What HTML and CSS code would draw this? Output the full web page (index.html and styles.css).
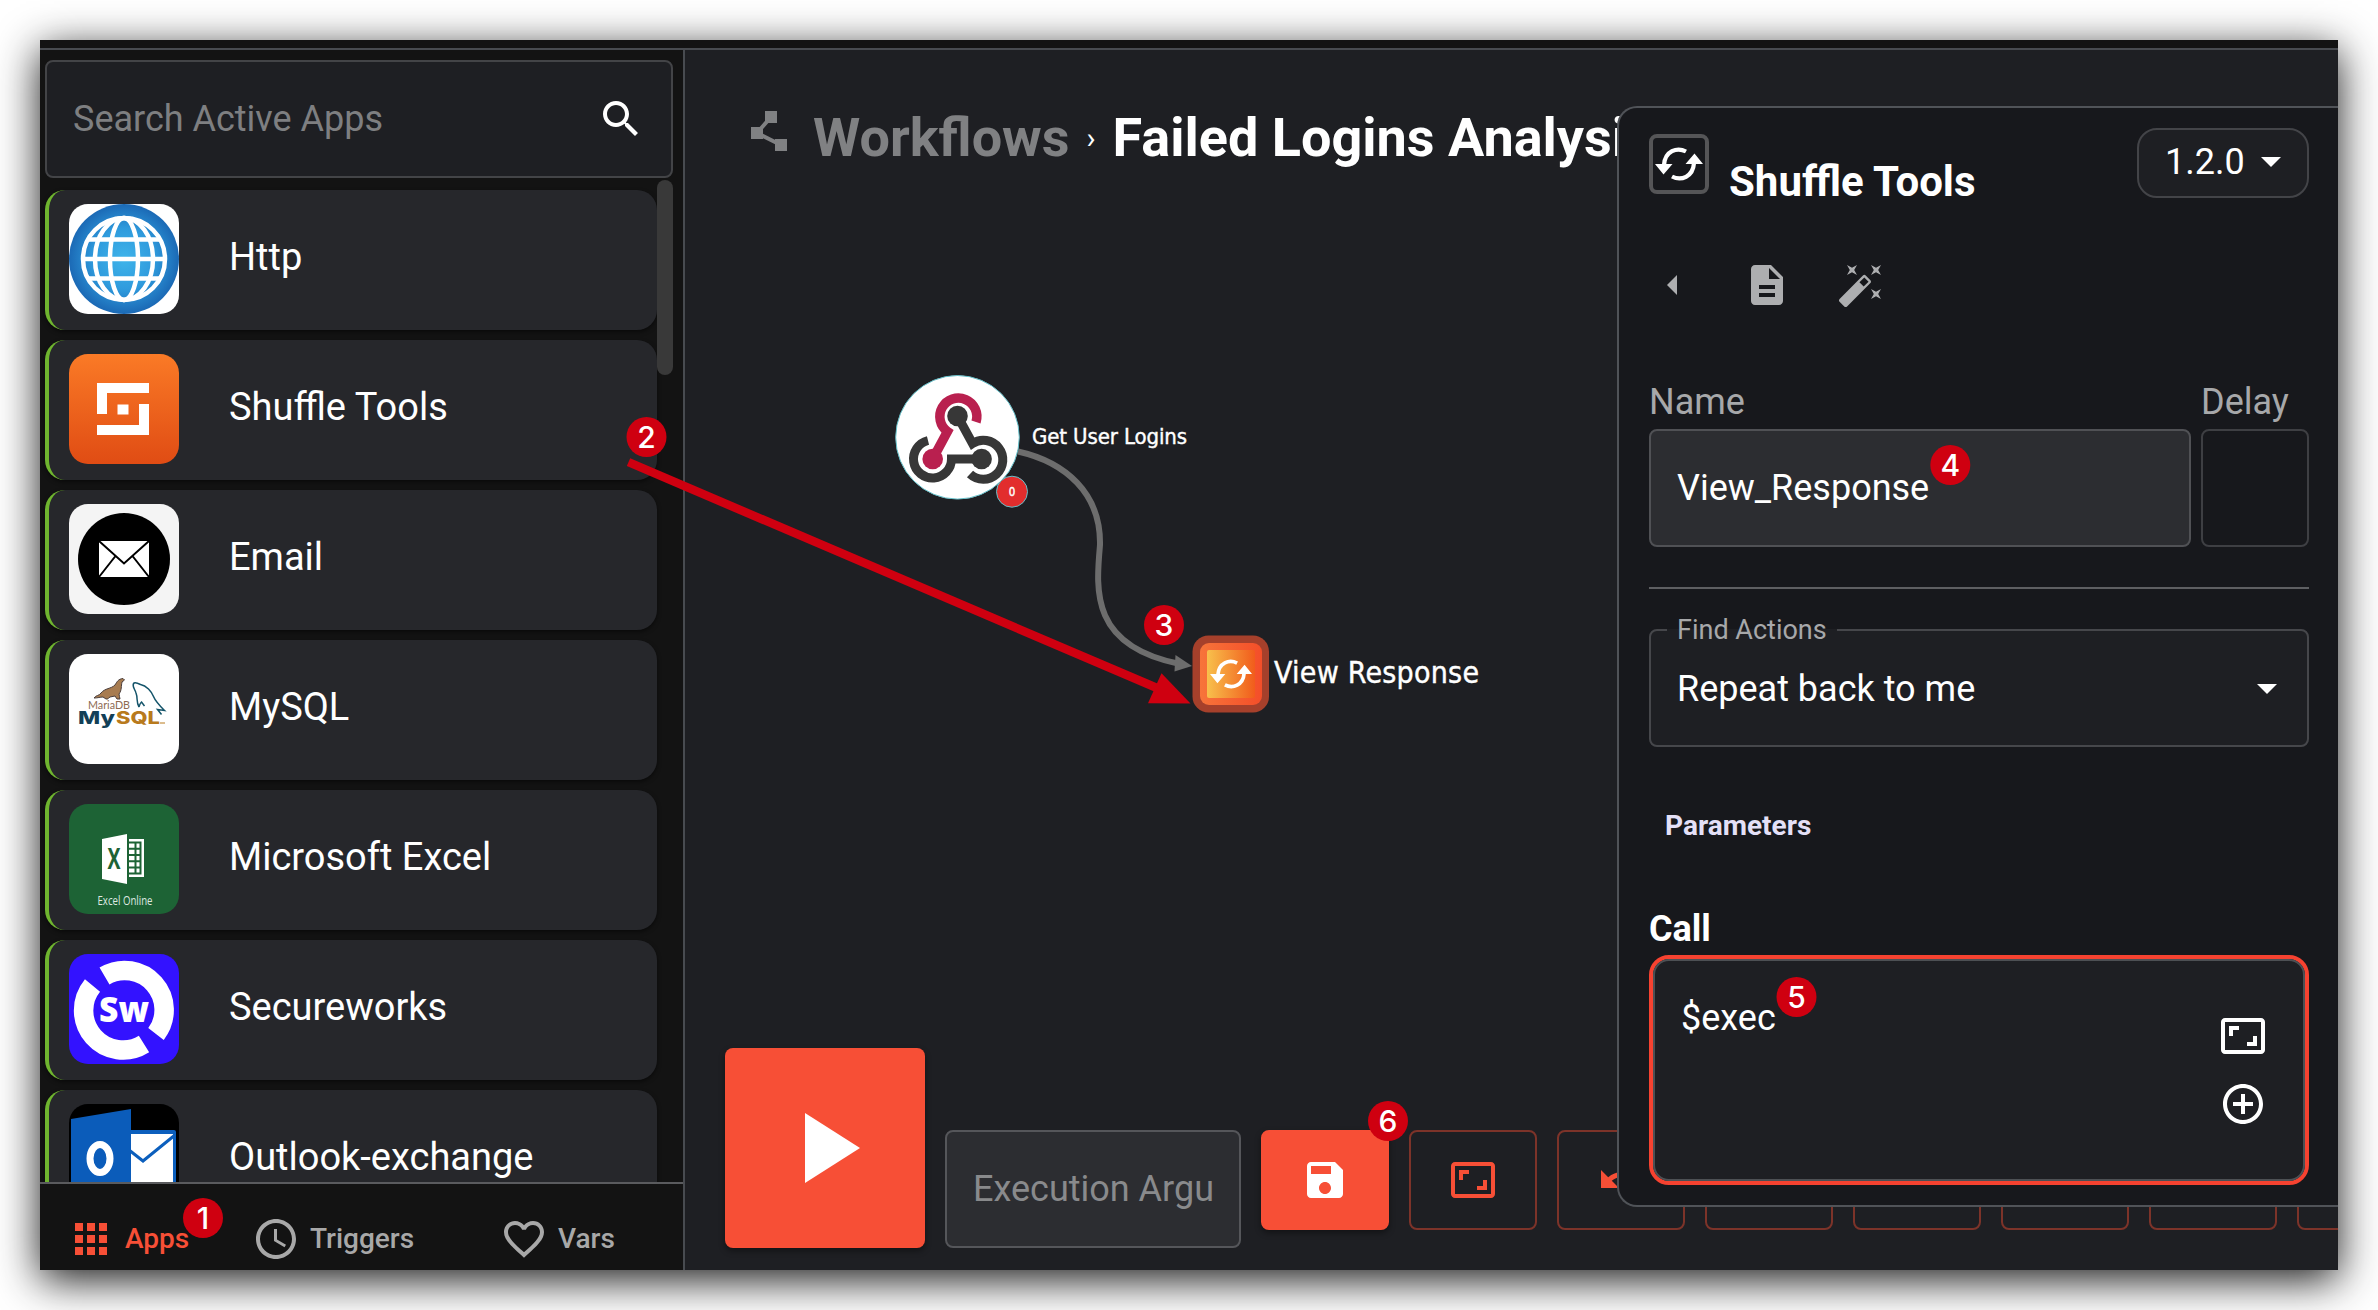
FILE: index.html
```html
<!DOCTYPE html>
<html lang="en">
<head>
<meta charset="utf-8">
<title>Shuffle – Failed Logins Analysis</title>
<link rel="stylesheet" href="styles.css">
</head>
<body>
<svg class="defs" width="0" height="0" aria-hidden="true">
  <defs>
    <radialGradient id="globe"><stop offset="0" stop-color="#3fb4ea"/><stop offset=".55" stop-color="#2f9bdd"/><stop offset="1" stop-color="#1b69b5"/></radialGradient>
    <linearGradient id="shuffle" x2="0" y2="1"><stop offset="0" stop-color="#fa7a26"/><stop offset="1" stop-color="#e04c14"/></linearGradient>
    <linearGradient id="tile"><stop offset="0" stop-color="#f8c04c"/><stop offset="1" stop-color="#f15c1c"/></linearGradient>
    <linearGradient id="tileRim"><stop offset="0" stop-color="#f7743a"/><stop offset="1" stop-color="#f44e29"/></linearGradient>
    <symbol id="sync" viewBox="0 0 48 36">
      <path d="M31 5.500C22 .8 10 5 9 19M17 30.500C26 35.200 38 31 39 17" fill="none" stroke="currentColor" stroke-width="4.200"/>
      <path d="M0 18h17.500L8.500 28.500zM48 18H30.500L39.500 7.500z" fill="currentColor"/>
    </symbol>
    <symbol id="aspect" viewBox="0 0 24 24"><path fill="currentColor" d="M19 12h-2v3h-3v2h5v-5zM7 9h3V7H5v5h2V9zm14-6H3c-1.100 0-2 .9-2 2v14c0 1.100.9 2 2 2h18c1.100 0 2-.9 2-2V5c0-1.100-.9-2-2-2zm0 16.010H3V4.990h18v14.020z"/></symbol>
  </defs>
</svg>

<div class="window">
  <div class="topbar"></div>
  <div class="main">
    <aside class="sidebar">
      <div class="search">
        <span>Search Active Apps</span>
        <svg class="icon" viewBox="0 0 24 24"><path fill="#fff" d="M15.500 14h-.79l-.28-.27C15.410 12.590 16 11.110 16 9.500 16 5.910 13.090 3 9.500 3S3 5.910 3 9.500 5.910 16 9.500 16c1.610 0 3.090-.59 4.230-1.570l.27.28v.79l5 4.990L20.490 19l-4.990-5zm-6 0C7.010 14 5 11.990 5 9.500S7.010 5 9.500 5 14 7.010 14 9.500 11.990 14 9.500 14z"/></svg>
      </div>
      <div class="list-wrap">
        <div class="list">
          <div class="app">
            <svg class="logo" viewBox="0 0 110 110"><rect width="110" height="110" fill="#fff"/><circle cx="55" cy="55" r="55" fill="url(#globe)"/><g fill="none" stroke="#fff" stroke-width="4.500"><circle cx="55" cy="55" r="41"/><ellipse cx="55" cy="55" rx="29" ry="41"/><ellipse cx="55" cy="55" rx="14" ry="41"/><path d="M14 55h82M20 35.500h70M20 74.500h70"/></g></svg>
            <span>Http</span>
          </div>
          <div class="app">
            <svg class="logo" viewBox="0 0 110 110"><rect width="110" height="110" fill="url(#shuffle)"/><path fill="#fff" d="M28 29h52v10H38v21H28zM48.500 50.500h11v10h-11zM70 50h10v31H28V71h42z"/></svg>
            <span>Shuffle Tools</span>
          </div>
          <div class="app">
            <svg class="logo" viewBox="0 0 110 110"><rect width="110" height="110" fill="#f4f4f4"/><circle cx="55" cy="55" r="46" fill="#000"/><path fill="#fff" d="M30 37h50v36H30z"/><path d="M30 37l25 22.500L80 37M30 73l16.500-21M80 73L63.500 52" fill="none" stroke="#000" stroke-width="2"/></svg>
            <span>Email</span>
          </div>
          <div class="app">
            <svg class="logo" viewBox="0 0 110 110"><rect width="110" height="110" fill="#fff"/><path d="M25 44c2-3 5-2 7-5 4-5 10-4 14-8 2-3 3-6 8-6.500l1.500 1.500-2.500 2c-1 4 0 8-3 12 0 2 1 3 1 5h-3l-2-3-5 1c-3 2-1 2-4 2l-3-2c-3 0-5 1-9 1z" fill="#a87c50" stroke="#4a3e3c" stroke-width="1"/><path d="M70 53c-3-5-1-9-3-14-1-4-4-6-2.500-9.500 1-1.500 5 0 7 1 6 1 11 7 13 12 2 5 5 8 11 14l-7-1 4 5M70 53c1-3 1-4 2.500-5l3 4" fill="none" stroke="#14546a" stroke-width="1.500"/><text x="19" y="54.500" class="mdb" textLength="42" lengthAdjust="spacingAndGlyphs">MariaDB</text><text x="9" y="69.500" class="mys" textLength="37" lengthAdjust="spacingAndGlyphs" fill="#123f57">My</text><text x="47" y="69.500" class="mys" textLength="44" lengthAdjust="spacingAndGlyphs" fill="#b87a1d">SQL</text><path d="M91 69h5" stroke="#b87a1d"/></svg>
            <span>MySQL</span>
          </div>
          <div class="app">
            <svg class="logo" viewBox="0 0 110 110"><rect width="110" height="110" fill="#1d6335"/><path fill="#fff" d="M33 35l25-5v50l-25-5zM60 35h15v38H60z"/><path stroke="#1d6335" stroke-width="2" fill="none" d="M60 38.500h11.500v31H60M60 44.700h11M60 51h11M60 57.200h11M60 63.500h11M66.500 38v32"/><text x="45" y="65" class="xl" textLength="13" lengthAdjust="spacingAndGlyphs">X</text><text x="28.500" y="101" class="xlo" textLength="55" lengthAdjust="spacingAndGlyphs">Excel Online</text></svg>
            <span>Microsoft Excel</span>
          </div>
          <div class="app">
            <svg class="logo" viewBox="0 0 110 110"><rect width="110" height="110" fill="#3312ff"/><g fill="none" stroke="#fff" stroke-width="19.500"><path d="M35.500 22A39.500 39.500 0 0 1 87 80"/><path d="M23.500 31.500A39.500 39.500 0 0 0 75 90"/></g><text x="55" y="67.500" class="sw" textLength="50" lengthAdjust="spacingAndGlyphs">Sw</text></svg>
            <span>Secureworks</span>
          </div>
          <div class="app">
            <svg class="logo" viewBox="0 0 110 110"><rect width="110" height="110" fill="#000"/><path fill="#0c5fbd" d="M60 26h45q2 0 2 2v62H60z"/><path fill="#fff" d="M62 30h42v60H62z"/><path d="M60 46l14 11 32-26" fill="none" stroke="#0c5fbd" stroke-width="3"/><path fill="#0b5cba" d="M2 15L62 5v105H2z"/><ellipse cx="31" cy="54.500" rx="10" ry="14" fill="none" stroke="#fff" stroke-width="7"/></svg>
            <span>Outlook-exchange</span>
          </div>
        </div>
        <div class="scroll"></div>
      </div>
      <nav class="tabs">
        <div class="tab tab-apps"><svg class="icon" viewBox="0 0 24 24"><path fill="currentColor" d="M4 8h4V4H4v4zm6 12h4v-4h-4v4zm-6 0h4v-4H4v4zm0-6h4v-4H4v4zm6 0h4v-4h-4v4zm6-10v4h4V4h-4zm-6 4h4V4h-4v4zm6 6h4v-4h-4v4zm0 6h4v-4h-4v4z"/></svg><span>Apps</span></div>
        <div class="tab tab-trig"><svg class="icon" viewBox="0 0 24 24"><path fill="currentColor" d="M11.990 2C6.470 2 2 6.480 2 12s4.470 10 9.990 10C17.520 22 22 17.520 22 12S17.520 2 11.990 2zM12 20c-4.420 0-8-3.580-8-8s3.580-8 8-8 8 3.580 8 8-3.580 8-8 8zm.5-13H11v6l5.250 3.150.75-1.230-4.500-2.670z"/></svg><span>Triggers</span></div>
        <div class="tab tab-vars"><svg class="icon" viewBox="0 0 24 24"><path fill="currentColor" d="M16.500 3c-1.740 0-3.410.81-4.500 2.090C10.910 3.810 9.240 3 7.500 3 4.420 3 2 5.420 2 8.500c0 3.780 3.400 6.860 8.550 11.540L12 21.350l1.450-1.320C18.600 15.360 22 12.280 22 8.500 22 5.420 19.580 3 16.500 3zm-4.400 15.550l-.1.100-.1-.1C7.140 14.240 4 11.390 4 8.500 4 6.500 5.500 5 7.500 5c1.540 0 3.040.99 3.570 2.360h1.870C13.460 5.990 14.960 5 16.500 5c2 0 3.500 1.500 3.500 3.500 0 2.890-3.140 5.740-7.900 10.050z"/></svg><span>Vars</span></div>
      </nav>
    </aside>

    <section class="canvas">
      <header class="crumbs">
        <svg class="wf" viewBox="0 0 36 40"><path d="M20 6L6 22l24 12" fill="none" stroke="#808183" stroke-width="4"/><path fill="#808183" d="M14 0h12v12H14zM0 16h12v12H0zM24 28h12v12H24z"/></svg>
        <span class="root">Workflows</span><span class="sep">›</span><span class="leaf">Failed Logins Analysis</span>
      </header>
      <div class="actions">
        <div class="play"><svg viewBox="0 0 55 70"><path fill="#fff" d="M0 0l55 35L0 70z"/></svg></div>
        <div class="arg"><span>Execution Argu</span></div>
        <div class="btn solid"><svg class="icon" viewBox="0 0 24 24"><path fill="#fff" d="M17 3H5c-1.110 0-2 .9-2 2v14c0 1.100.89 2 2 2h14c1.100 0 2-.9 2-2V7l-4-4zm-5 16c-1.660 0-3-1.340-3-3s1.340-3 3-3 3 1.340 3 3-1.340 3-3 3zm3-10H5V5h10v4z"/></svg></div>
        <div class="btn"><svg class="icon"><use href="#aspect"/></svg></div>
        <div class="btn"><svg class="icon" viewBox="0 0 24 24"><path fill="currentColor" d="M12.500 8c-2.650 0-5.050.99-6.900 2.600L2 7v9h9l-3.620-3.620c1.390-1.160 3.160-1.880 5.120-1.880 3.540 0 6.550 2.310 7.600 5.500l2.370-.78C21.080 11.030 17.150 8 12.500 8z"/></svg></div>
        <div class="btn"></div><div class="btn"></div><div class="btn"></div><div class="btn"></div><div class="btn"></div>
      </div>
    </section>
  </div>

  <section class="panel">
    <div class="head">
      <div class="glyph"><svg><use href="#sync"/></svg></div>
      <h2>Shuffle Tools</h2>
      <div class="version"><span>1.2.0</span><i class="caret"></i></div>
    </div>
    <div class="tools">
      <svg class="icon" viewBox="0 0 24 24"><path fill="currentColor" d="M14.500 7l-5 5 5 5z"/></svg>
      <svg class="icon" viewBox="0 0 24 24"><path fill="currentColor" d="M14 2H6c-1.100 0-1.990.9-1.990 2L4 20c0 1.100.89 2 1.990 2H18c1.100 0 2-.9 2-2V8l-6-6zm2 16H8v-2h8v2zm0-4H8v-2h8v2zm-3-5V3.500L18.500 9H13z"/></svg>
      <svg class="icon" viewBox="0 0 24 24"><path fill="currentColor" d="M7.500 5.600L10 7 8.600 4.500 10 2 7.500 3.400 5 2l1.400 2.500L5 7zm12 9.800L17 14l1.400 2.500L17 19l2.500-1.400L22 19l-1.400-2.500L22 14zM22 2l-2.500 1.400L17 2l1.400 2.500L17 7l2.500-1.400L22 7l-1.400-2.500zm-7.630 5.290a.996.996 0 0 0-1.410 0L1.290 18.960c-.39.39-.39 1.020 0 1.410l2.340 2.340c.39.39 1.020.39 1.410 0L16.700 11.050c.39-.39.39-1.020 0-1.410l-2.330-2.350zm-1.030 5.490l-2.120-2.120 2.440-2.440 2.120 2.120-2.440 2.440z"/></svg>
    </div>
    <div class="row">
      <div class="col-name"><label>Name</label><div class="input"><span>View_Response</span></div></div>
      <div class="col-delay"><label>Delay</label><div class="input empty"></div></div>
    </div>
    <div class="rule"></div>
    <fieldset class="select">
      <legend>Find Actions</legend>
      <div class="value"><span>Repeat back to me</span><i class="caret"></i></div>
    </fieldset>
    <h3>Parameters</h3>
    <h4>Call</h4>
    <div class="call">
      <div class="call-in">
        <span>$exec</span>
        <div class="call-icons">
          <svg class="icon"><use href="#aspect"/></svg>
          <svg class="icon" viewBox="0 0 24 24"><path fill="currentColor" d="M13 7h-2v4H7v2h4v4h2v-4h4v-2h-4V7zm-1-5C6.480 2 2 6.480 2 12s4.480 10 10 10 10-4.480 10-10S17.520 2 12 2zm0 18c-4.410 0-8-3.590-8-8s3.590-8 8-8 8 3.590 8 8-3.590 8-8 8z"/></svg>
        </div>
      </div>
    </div>
  </section>
</div>

<svg class="graph" viewBox="0 0 2378 1310">
  <path d="M1018 451.500C1065 462 1101 493 1100 545C1096 590 1090 646 1180 664" fill="none" stroke="#6d6d6d" stroke-width="6"/>
  <path d="M1192 666l-16.500-11-1 16.500z" fill="#6d6d6d"/>
  <circle cx="957.500" cy="437.300" r="61.800" fill="#fff" stroke="#63bfc9" stroke-width="1"/>
  <g fill="none" stroke="#373737" stroke-width="9">
    <path d="M957.500 416L972.500 443.500A19.500 19.500 0 1 1 970 474"/>
    <path d="M981.500 459H951.500A19 19 0 1 1 928 440.500"/>
    <path stroke="#b9204f" stroke-width="9.500" d="M932.700 459l14.800-27.500A18.500 18.500 0 1 1 976 422"/>
  </g>
  <circle cx="957.500" cy="416" r="10.300" fill="#373737"/><circle cx="981.600" cy="459" r="10.300" fill="#373737"/><circle cx="932.700" cy="459" r="10.300" fill="#b9204f"/>
  <circle cx="1012" cy="491.700" r="15.500" fill="#e22d2d" stroke="#63bfc9" stroke-width="1"/>
  <text x="1012" y="495.700" class="n0">0</text>
  <text x="1032" y="444" class="n1" textLength="155">Get User Logins</text>
  <rect x="1192.500" y="635.500" width="76.500" height="77" rx="16" fill="#a6402b"/>
  <rect x="1200" y="643" width="62" height="62" rx="9" fill="url(#tileRim)"/>
  <rect x="1207" y="650" width="48" height="48" rx="2" fill="url(#tile)"/>
  <svg x="1210" y="658" width="42" height="32" color="#fff"><use href="#sync"/></svg>
  <text x="1274" y="682.500" class="n2" textLength="205">View Response</text>
  <path d="M628.500 462.200L1157 688" stroke="#cf0010" stroke-width="8.500"/>
  <path d="M1190.500 703.500L1161.500 673.300 1148 703.300z" fill="#cf0010"/>
  <g class="mark"><circle cx="203" cy="1218" r="20"/><text x="203" y="1229">1</text>
  <circle cx="646.500" cy="437" r="20"/><text x="646.500" y="448">2</text>
  <circle cx="1164" cy="625" r="20"/><text x="1164" y="636">3</text>
  <circle cx="1950.300" cy="465" r="20"/><text x="1950.300" y="476">4</text>
  <circle cx="1796.500" cy="997" r="20"/><text x="1796.500" y="1008">5</text>
  <circle cx="1388" cy="1121" r="20"/><text x="1388" y="1132">6</text></g>
</svg>
</body>
</html>
```
FILE: styles.css
```css
* { box-sizing: border-box; }
body { margin: 0; width: 2378px; height: 1310px; padding: 40px; background: #fff; overflow: hidden; font-family: Roboto, "Liberation Sans", sans-serif; color: #fff; font-size: 36px; position: relative; }
.defs { position: absolute; }
.icon { width: 48px; height: 48px; display: block; flex: none; }
.window { position: relative; width: 2298px; height: 1230px; background: #131313; box-shadow: 0 10px 40px rgba(0,0,0,.9); display: flex; flex-direction: column; }
.topbar { height: 10px; border-bottom: 2px solid #484b50; flex: none; }
.main { display: flex; flex: 1; min-height: 0; }
.sidebar { width: 645px; border-right: 2px solid #484b50; display: flex; flex-direction: column; flex: none; }
.search { margin: 10px 10px 0 5px; height: 118px; border: 2px solid #434447; border-radius: 8px; background: #1e1f23; display: flex; align-items: center; justify-content: space-between; padding: 0 26px; color: #7e7f81; flex: none; }
.list-wrap { display: flex; justify-content: space-between; padding: 2px 10px 0 5px; flex: 1; min-height: 0; overflow: hidden; }
.list { display: flex; flex-direction: column; gap: 10px; padding-top: 10px; width: 612px; }
.app { height: 140px; flex: none; background: #26272b; border-left: 4px solid #6fb52f; border-radius: 20px; display: flex; align-items: center; padding: 0 0 2px 20px; font-size: 38px; box-shadow: 0 2px 4px rgba(0,0,0,.5); }
.app span { margin-left: 50px; margin-top: -4px; }
.logo { width: 110px; height: 110px; border-radius: 19px; }
.scroll { width: 16px; height: 195px; border-radius: 8px; background: #393939; }
.tabs { height: 88px; border-top: 2px solid #5a5b5e; flex: none; display: flex; align-items: center; padding: 23px 0 0 27px; font-size: 28px; color: #a8a8a8; font-weight: 500; }
.tab { display: flex; align-items: center; gap: 10px; }
.tab-apps { color: #f74f36; width: 185px; }
.tab-trig { width: 248px; }
.canvas { flex: 1; min-width: 0; background: #1e1f23; display: flex; flex-direction: column; justify-content: space-between; padding: 57px 0 22px 40px; overflow: hidden; }
.crumbs { display: flex; align-items: center; padding-left: 26px; white-space: nowrap; font-size: 54px; font-weight: 700; height: 60px; }
.wf { width: 36px; height: 40px; margin-top: -12px; }
.root { color: #808183; margin-left: 26px; }
.sep { font-size: 30px; font-weight: 400; margin: 0 17px; }
.actions { display: flex; gap: 20px; align-items: flex-start; height: 200px; }
.play { width: 200px; height: 200px; border-radius: 8px; background: #f74f36; flex: none; display: flex; align-items: center; justify-content: center; padding-left: 14px; box-shadow: 0 3px 6px rgba(0,0,0,.4); }
.play svg { width: 55px; height: 70px; }
.arg { width: 296px; height: 118px; margin-top: 82px; flex: none; border: 2px solid #55565a; border-radius: 8px; background: #2c2d31; padding: 0 0 0 26px; display: flex; align-items: center; color: #898a8c; white-space: nowrap; }
.btn { width: 128px; height: 100px; margin-top: 82px; flex: none; border: 2px solid #7d3329; border-radius: 8px; display: flex; align-items: center; justify-content: center; color: #f74f36; }
.solid { background: #f74f36; border-color: #f74f36; box-shadow: 0 3px 6px rgba(0,0,0,.4); }
/* action panel floats over the canvas and is cut by the window's right edge */
.panel { position: absolute; left: 1577px; top: 66px; width: 721px; height: 1101px; border: 2px solid #505358; border-right: 0; border-radius: 20px 0 0 20px; background: #17181c; padding: 0 29px 0 30px; display: flex; flex-direction: column; }
.head { display: flex; padding-top: 20px; height: 120px; }
.glyph { width: 60px; height: 60px; margin-top: 6px; border: 4px solid #555557; border-radius: 8px; display: flex; align-items: center; justify-content: center; }
.glyph svg { width: 48px; height: 36px; flex: none; }
h2 { margin: 29px 0 0 20px; font-size: 42px; line-height: 50px; font-weight: 700; }
.version { margin-left: auto; width: 172px; height: 70px; border: 2px solid #434448; border-radius: 20px; background: #1e1f23; display: flex; align-items: center; padding: 0 26px 2px 26px; justify-content: space-between; }
.caret { border: 10px solid transparent; border-top-color: #fff; border-bottom: 0; }
.tools { display: flex; margin: 33px 0 0 -1px; gap: 46.5px; color: #adaeb0; }
.row { display: flex; gap: 10px; margin-top: 71px; }
label { display: block; color: #a7a8aa; line-height: 44px; height: 49px; }
.col-name { width: 542px; } .col-delay { width: 108px; }
.input { height: 118px; border: 2px solid #505155; border-radius: 8px; background: #2c2d31; display: flex; align-items: center; padding-left: 26px; }
.empty { background: none; border-color: #3e3f43; }
.rule { height: 2px; background: #5e5f62; margin-top: 40px; }
.select { margin: 24px 0 0; padding: 0 30px 0 16px; height: 134px; min-width: 0; border: 2px solid #46474b; border-radius: 8px; background: #1e1f23; }
.value { display: flex; justify-content: space-between; align-items: center; height: 84px; padding: 2px 0 0 10px; }
legend { font-size: 27px; line-height: 32px; padding: 1px 10px 0; color: #a7a8aa; }
h3 { margin: 61px 0 0 16px; font-size: 28px; line-height: 36px; color: #e4e0f7; font-weight: 700; }
h4 { margin: 63px 0 0; font-size: 36px; line-height: 44px; font-weight: 700; }
.call { margin-top: 4px; height: 230px; border: 4px solid #f64230; border-radius: 20px; background: #1e1f23; }
.call-in { height: 100%; border: 2px solid #4d5054; border-radius: 16px; display: flex; justify-content: space-between; padding: 34px 36px 0 26px; }
.call-in span { padding-top: 2px; }
.call-icons { display: flex; flex-direction: column; gap: 20px; padding-top: 17px; }
.graph { position: absolute; left: 0; top: 0; width: 2378px; height: 1310px; }
.n0, .n1, .n2 { fill: #fff; stroke: #fff; stroke-width: .4px; font-family: "DejaVu Sans Condensed", "DejaVu Sans", sans-serif; font-stretch: condensed; }
.n0 { font-size: 11.5px; text-anchor: middle; } .n1 { font-size: 22px; } .n2 { font-size: 30px; }
.mark circle { fill: #cf0010; }
.mark text { fill: #fff; font: 500 30px Inter, sans-serif; text-anchor: middle; }
.mdb { font: 11px Lato, sans-serif; fill: #8d6a52; }
.mys { font: 800 17.5px Inter, sans-serif; }
.xl { font: 700 28px "Open Sans", sans-serif; fill: #1d6335; text-anchor: middle; }
.xlo { font: 12.5px "Open Sans", sans-serif; fill: #dfe9e2; }
.sw { font: 800 36px "Open Sans", sans-serif; fill: #fff; text-anchor: middle; }
```
